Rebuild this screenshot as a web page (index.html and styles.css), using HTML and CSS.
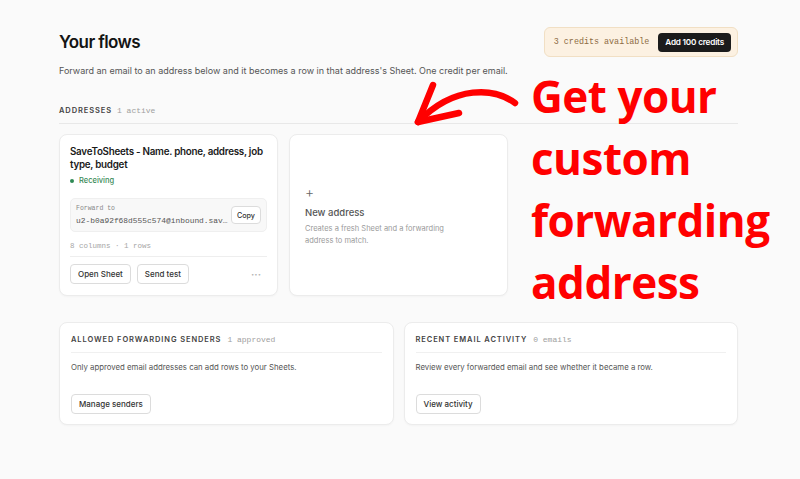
FILE: index.html
```html
<!DOCTYPE html>
<html>
<head>
<meta charset="utf-8">
<link rel="stylesheet" href="styles.css">
</head>
<body>
<main class="page">
  <header class="head">
    <h1 class="title">Your flows</h1>
    <div class="credits">
      <span class="credits-text">3 credits available</span>
      <button class="btn-dark">Add 100 credits</button>
    </div>
  </header>
  <p class="subtitle">Forward an email to an address below and it becomes a row in that address's Sheet. One credit per email.</p>

  <div class="section-label"><span class="caps">ADDRESSES</span><span class="mono-muted">1 active</span></div>

  <div class="address-grid">
    <div class="card addr">
      <div class="addr-title">SaveToSheets - Name. phone, address, job type, budget</div>
      <div class="status"><span class="dot"></span>Receiving</div>
      <div class="forward">
        <div class="forward-info">
          <div class="forward-label">Forward to</div>
          <div class="forward-addr">u2-b0a92f68d555c574@inbound.sav…</div>
        </div>
        <button class="btn small">Copy</button>
      </div>
      <div class="meta">8 columns · 1 rows</div>
      <div class="actions">
        <button class="btn">Open Sheet</button>
        <button class="btn">Send test</button>
        <span class="more">···</span>
      </div>
    </div>
    <div class="card new">
      <div class="plus">+</div>
      <div class="new-title">New address</div>
      <div class="new-desc">Creates a fresh Sheet and a forwarding address to match.</div>
    </div>
  </div>

  <div class="bottom-grid">
    <div class="card panel">
      <div class="panel-head"><span class="caps">ALLOWED FORWARDING SENDERS</span><span class="mono-muted">1 approved</span></div>
      <p class="panel-text">Only approved email addresses can add rows to your Sheets.</p>
      <button class="btn">Manage senders</button>
    </div>
    <div class="card panel">
      <div class="panel-head"><span class="caps">RECENT EMAIL ACTIVITY</span><span class="mono-muted">0 emails</span></div>
      <p class="panel-text">Review every forwarded email and see whether it became a row.</p>
      <button class="btn">View activity</button>
    </div>
  </div>
</main>

<svg class="arrow" width="800" height="479" viewBox="0 0 800 479">
  <path d="M515 103 C 495 88, 455 84, 418 122" fill="none" stroke="#ff0000" stroke-width="6.5" stroke-linecap="round"/>
  <path d="M433 85 L418 122 L459 113" fill="none" stroke="#ff0000" stroke-width="6.5" stroke-linecap="round" stroke-linejoin="round"/>
</svg>
<div class="callout">Get your<br>custom<br>forwarding<br>address</div>
</body>
</html>
```

FILE: styles.css
```css
* { box-sizing: border-box; }
html, body { margin: 0; padding: 0; }
body {
  background: #fafafa;
  font-family: Inter, "Noto Sans", sans-serif;
  color: #1a1a1a;
  width: 800px;
  height: 479px;
  overflow: hidden;
  position: relative;
}
.page {
  width: 679px;
  margin-left: 59px;
  padding-top: 27px;
}
.head {
  display: flex;
  justify-content: space-between;
  align-items: center;
  height: 30px;
}
.title {
  margin: 0;
  font-size: 17px;
  font-weight: 600;
  letter-spacing: -0.6px;
  color: #141414;
}
.credits {
  display: flex;
  align-items: center;
  gap: 9px;
  height: 30px;
  padding: 0 6px 0 9px;
  background: #fcf1e2;
  border: 1px solid #f1dfc4;
  border-radius: 6px;
  white-space: nowrap;
}
.credits-text {
  font-family: "Liberation Mono", "DejaVu Sans Mono", monospace;
  font-size: 8.4px;
  color: #8c6b42;
}
.btn-dark {
  font-family: Inter, sans-serif;
  background: #1b1b1b;
  color: #fff;
  border: none;
  border-radius: 4px;
  font-size: 8.2px;
  font-weight: 600;
  height: 19px;
  padding: 0 7px;
  letter-spacing: -0.2px;
  white-space: nowrap;
}
.subtitle {
  margin: 7px 0 0;
  font-size: 9px;
  line-height: 14px;
  color: #555;
}
.section-label {
  margin-top: 27px;
  padding-bottom: 6px;
  border-bottom: 1px solid #e8e8e8;
  display: flex;
  align-items: baseline;
  gap: 5px;
  line-height: 12px;
}
.caps {
  font-size: 7.5px;
  font-weight: 600;
  letter-spacing: 0.9px;
  color: #444;
}
.mono-muted {
  font-family: "Liberation Mono", "DejaVu Sans Mono", monospace;
  font-size: 8px;
  color: #a0a0a0;
}
.address-grid {
  margin-top: 10px;
  display: grid;
  grid-template-columns: repeat(3, minmax(0, 1fr));
  gap: 11px;
}
.card {
  background: #fff;
  border: 1px solid #ececec;
  border-radius: 8px;
  box-shadow: 0 1px 2px rgba(0,0,0,0.03);
}
.addr {
  padding: 10px 10px 11px;
  min-width: 0;
}
.addr-title {
  font-size: 9.8px;
  font-weight: 600;
  line-height: 13px;
  color: #1a1a1a;
  letter-spacing: -0.25px;
  padding-right: 2px;
}
.status {
  margin-top: 4px;
  line-height: 12px;
  font-size: 7.5px;
  font-weight: 500;
  color: #3a8a58;
  display: flex;
  align-items: center;
  gap: 5px;
}
.dot {
  width: 4px;
  height: 4px;
  border-radius: 50%;
  background: #2f8a55;
}
.forward {
  margin-top: 11px;
  background: #f8f8f8;
  border: 1px solid #efefef;
  border-radius: 5px;
  padding: 4px 5px 4px 5px;
  display: flex;
  align-items: center;
  justify-content: space-between;
  gap: 4px;
  height: 34px;
}
.forward-info {
  min-width: 0;
}
.forward-label {
  font-family: "Liberation Mono", "DejaVu Sans Mono", monospace;
  font-size: 6.5px;
  color: #888;
  line-height: 10px;
}
.forward-addr {
  font-family: "Liberation Mono", "DejaVu Sans Mono", monospace;
  font-size: 7.9px;
  color: #555;
  line-height: 13px;
  white-space: nowrap;
}
.btn {
  font-family: Inter, sans-serif;
  background: #fff;
  border: 1px solid #dcdcdc;
  border-radius: 4px;
  font-size: 8px;
  font-weight: 500;
  color: #333;
  height: 20px;
  padding: 0 7px;
  white-space: nowrap;
}
.btn.small {
  height: 18px;
  font-size: 7.2px;
  padding: 0 5px;
  flex-shrink: 0;
}
.meta {
  margin-top: 9px;
  padding-bottom: 5px;
  border-bottom: 1px solid #eeeeee;
  font-family: "Liberation Mono", "DejaVu Sans Mono", monospace;
  font-size: 7.5px;
  color: #a6a6a6;
  line-height: 10px;
}
.actions {
  margin-top: 7px;
  display: flex;
  align-items: center;
  gap: 6px;
}
.more {
  margin-left: auto;
  margin-right: 6px;
  font-size: 10px;
  font-weight: 700;
  color: #b5b5b5;
}
.new {
  padding: 0 15px;
  display: flex;
  flex-direction: column;
  justify-content: center;
}
.plus {
  font-size: 14px;
  font-weight: 300;
  color: #666;
  line-height: 14px;
  margin-top: 2px;
}
.new-title {
  margin-top: 7px;
  font-size: 9.5px;
  font-weight: 500;
  color: #555;
  line-height: 13px;
}
.new-desc {
  margin-top: 4px;
  font-size: 7.5px;
  color: #9a9a9a;
  line-height: 12px;
  width: 150px;
}
.bottom-grid {
  margin-top: 26px;
  display: grid;
  grid-template-columns: 1fr 1fr;
  gap: 10px;
}
.panel {
  padding: 11px 11px 10px;
  display: flex;
  flex-direction: column;
  align-items: flex-start;
}
.panel-head {
  width: 100%;
  display: flex;
  align-items: baseline;
  gap: 6px;
  line-height: 12px;
  padding-bottom: 6px;
  border-bottom: 1px solid #f0f0f0;
}
.panel-text {
  margin: 8px 0 0;
  font-size: 7.8px;
  line-height: 12px;
  color: #555;
}
.panel .btn {
  margin-top: 21px;
}
.arrow {
  position: absolute;
  left: 0;
  top: 0;
  pointer-events: none;
}
.callout {
  position: absolute;
  left: 531px;
  top: 65px;
  font-family: "Open Sans", sans-serif;
  font-weight: 700;
  font-size: 44px;
  line-height: 62px;
  color: #ff0000;
  letter-spacing: -0.5px;
}
```
